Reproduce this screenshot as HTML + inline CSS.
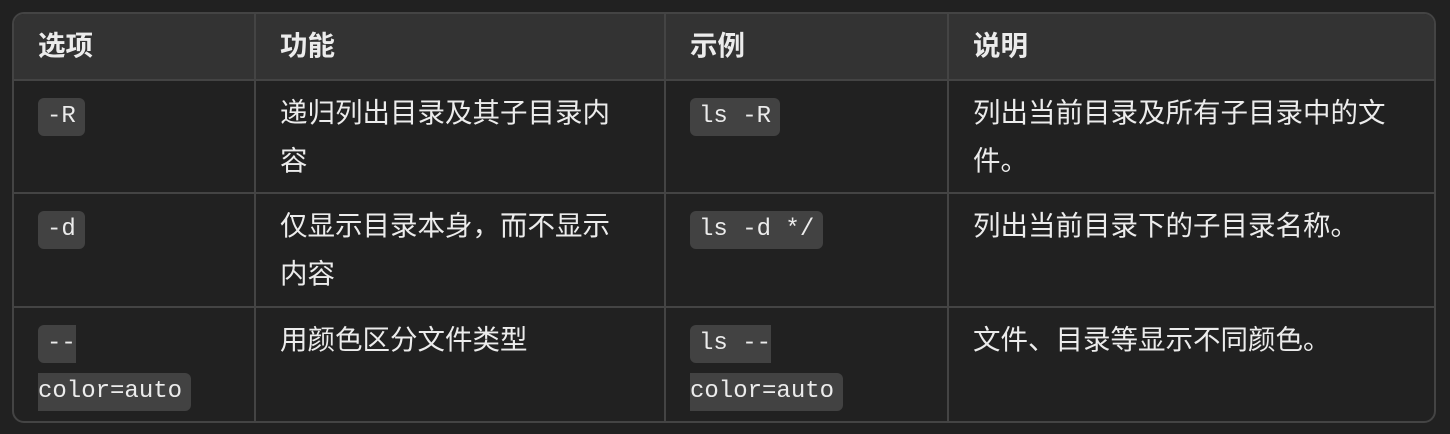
<!DOCTYPE html>
<html><head><meta charset="utf-8"><style>
html,body{margin:0;background:#212121;width:1450px;height:434px;overflow:hidden}
.wrap{position:absolute;left:12px;top:12px;width:1420px;height:407px;border:2px solid #444;border-radius:12px;overflow:hidden}
table{border-collapse:collapse;width:100%;font-family:"Liberation Sans","Noto Sans CJK SC",sans-serif;font-size:27.5px;color:#ececec;table-layout:fixed}
td,th{border:2px solid #444;padding:8px 24px 0;line-height:48px;vertical-align:top;text-align:left;box-sizing:border-box}
tr:first-child th{border-top:none}
td:first-child,th:first-child{border-left:none}
td:last-child,th:last-child{border-right:none}
tr:last-child td{border-bottom:none}
th{background:#333;font-weight:bold}
code{font-family:"Liberation Mono","DejaVu Sans Mono",monospace;font-size:24px;line-height:24px;background:#424242;border-radius:6px;padding:5px 9px 6px;-webkit-box-decoration-break:slice;box-decoration-break:slice}
</style></head><body>
<div class="wrap"><table>
<colgroup><col style="width:241px"><col style="width:410px"><col style="width:283px"><col></colgroup>
<tr style="height:66px"><th>选项</th><th>功能</th><th>示例</th><th>说明</th></tr>
<tr style="height:113px"><td><code>-R</code></td><td>递归列出目录及其子目录内<br>容</td><td><code>ls -R</code></td><td>列出当前目录及所有子目录中的文<br>件。</td></tr>
<tr style="height:114px"><td><code>-d</code></td><td>仅显示目录本身，而不显示<br>内容</td><td><code>ls -d */</code></td><td>列出当前目录下的子目录名称。</td></tr>
<tr style="height:114px"><td><code>--<br>color=auto</code></td><td>用颜色区分文件类型</td><td><code>ls --<br>color=auto</code></td><td>文件、目录等显示不同颜色。</td></tr>
</table></div>
</body></html>
